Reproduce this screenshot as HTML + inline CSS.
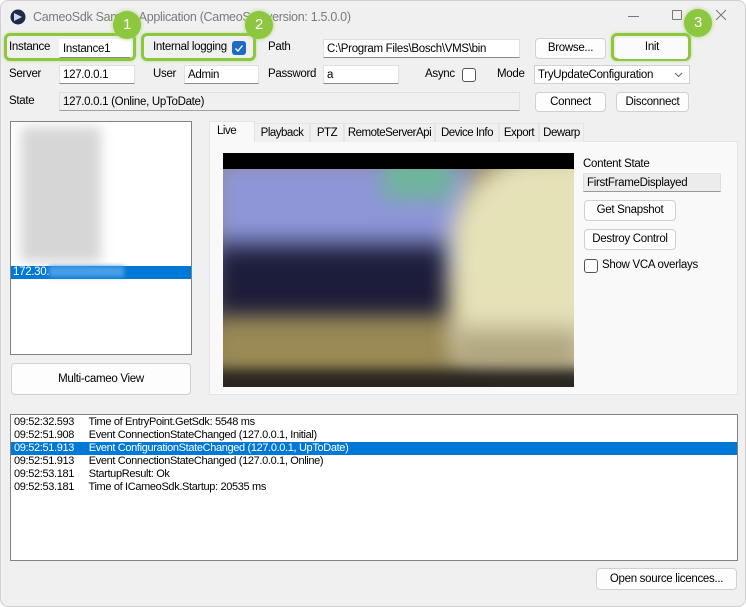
<!DOCTYPE html>
<html><head><meta charset="utf-8"><style>
*{box-sizing:border-box;margin:0;padding:0}
body{width:746px;height:607px;background:#fff;font-family:"Liberation Sans",sans-serif;font-size:11.5px;color:#000;position:relative;overflow:hidden;letter-spacing:-0.3px}
.win{position:absolute;left:0;top:0;width:746px;height:607px;background:#f0f0f0;border:1px solid #d0d0d0;border-radius:8px}
.a{position:absolute;white-space:nowrap}
.tb{position:absolute;background:#fff;border:1px solid #e0e0e0;border-bottom:1px solid #8a8a8a;padding:1px 3px;line-height:16px;height:19px}
.btn{position:absolute;background:#fdfdfd;border:1px solid #d0d0d0;border-radius:4px;text-align:center;line-height:18px}
.g{position:absolute;border:3px solid #8dc63f;border-radius:6px;box-shadow:0 0 3px #b8dd88}
.badge{position:absolute;width:28px;height:28px;border-radius:50%;background:#8dc63f;color:#fff;font-size:15px;text-align:center;line-height:28px;box-shadow:0 0 4px #a9d46f}
.cb{position:absolute;width:14px;height:14px;border:1px solid #555;border-radius:3px;background:#fff}
.tab{position:absolute;top:122px;height:19px;line-height:18px;border:1px solid #e4e4e4;border-bottom:none;background:#f0f0f0;text-align:center;letter-spacing:-0.5px;font-size:11.5px}
.log div{height:13px;line-height:13px;padding-left:3px;font-size:11px;white-space:nowrap;letter-spacing:-0.35px}
.log span{display:inline-block;width:72px}
</style></head><body><div class="win">
<svg class="a" style="left:9px;top:8px" width="16" height="16" viewBox="0 0 16 16"><circle cx="8" cy="8" r="7.5" fill="#1d2a4a"/><path d="M4 4 L12 8 L4 12 Z" fill="#cfd8ea"/></svg>
<div class="a" style="left:32px;top:9px;color:#7a7a7a;font-size:12.5px">CameoSdk Sample Application (CameoSdk version: 1.5.0.0)</div>
<div class="a" style="left:627px;top:15px;width:11px;height:1px;background:#777"></div>
<div class="a" style="left:671px;top:9px;width:10px;height:10px;border:1px solid #777;border-radius:1px"></div>
<svg class="a" style="left:714px;top:8px" width="12" height="12"><path d="M1 1L11 11M11 1L1 11" stroke="#777" stroke-width="1"/></svg>

<div class="g" style="left:3px;top:32px;width:132px;height:28px"></div>
<div class="g" style="left:140px;top:32px;width:115px;height:28px"></div>
<div class="g" style="left:610px;top:32px;width:80px;height:28px"></div>

<div class="a" style="left:8px;top:40px">Instance</div>
<div class="tb" style="left:58px;top:38px;width:72px;border-color:#fff;border-bottom-color:#8a8a8a">Instance1</div>
<div class="a" style="left:152px;top:40px">Internal logging</div>
<div class="a" style="left:231px;top:40px;width:14px;height:14px;background:#1e6bc4;border-radius:3px"><svg width="14" height="14"><path d="M3.5 7.5L6 10L10.5 4.5" stroke="#fff" stroke-width="1.3" fill="none"/></svg></div>
<div class="a" style="left:267px;top:40px">Path</div>
<div class="tb" style="left:322px;top:38px;width:197px">C:\Program Files\Bosch\VMS\bin</div>
<div class="btn" style="left:534px;top:37px;width:71px;height:21px">Browse...</div>
<div class="btn" style="left:615px;top:37px;width:72px;height:21px;border:none;background:#fbfbfb">Init</div>

<div class="a" style="left:8px;top:67px">Server</div>
<div class="tb" style="left:58px;top:64px;width:76px">127.0.0.1</div>
<div class="a" style="left:152px;top:67px">User</div>
<div class="tb" style="left:183px;top:64px;width:75px">Admin</div>
<div class="a" style="left:267px;top:67px">Password</div>
<div class="tb" style="left:322px;top:64px;width:76px">a</div>
<div class="a" style="left:424px;top:67px">Async</div>
<div class="cb" style="left:461px;top:67px"></div>
<div class="a" style="left:496px;top:67px">Mode</div>
<div class="tb" style="left:533px;top:64px;width:156px;border-color:#d0d0d0">TryUpdateConfiguration<svg style="position:absolute;right:6px;top:6px" width="9" height="6"><path d="M1 1L4.5 4.5L8 1" stroke="#666" fill="none"/></svg></div>

<div class="a" style="left:8px;top:94px">State</div>
<div class="tb" style="left:58px;top:91px;width:461px;background:#f0f0f0;border-color:#e0e0e0;border-bottom-color:#a0a0a0">127.0.0.1 (Online, UpToDate)</div>
<div class="btn" style="left:534px;top:91px;width:71px;height:20px">Connect</div>
<div class="btn" style="left:615px;top:91px;width:73px;height:20px">Disconnect</div>

<div class="badge" style="left:112px;top:10px">1</div>
<div class="badge" style="left:244px;top:10px">2</div>
<div class="badge" style="left:683px;top:8px">3</div>

<div class="a" style="left:9px;top:120px;width:182px;height:234px;background:#fff;border:1px solid #828282;overflow:hidden">
<div class="a" style="left:10px;top:5px;width:80px;height:135px;background:#d6d6d6;filter:blur(6px)"></div>
<div class="a" style="left:0;top:144px;width:180px;height:13px;background:#0078d7;color:#fff;line-height:13px;padding-left:2px">172.30.<span style="display:inline-block;width:75px;height:11px;background:#4a9ee6;filter:blur(2px);vertical-align:middle"></span></div>
</div>
<div class="btn" style="left:10px;top:362px;width:180px;height:32px;line-height:30px">Multi-cameo View</div>

<div class="a" style="left:208px;top:140px;width:529px;height:254px;background:#f9f9f9;border:1px solid #e4e4e4"></div>
<div class="tab" style="left:208px;top:120px;width:46px;height:21px;background:#f9f9f9;z-index:2;text-align:left;padding-left:7px">Live</div>
<div class="tab" style="left:253px;width:56px">Playback</div>
<div class="tab" style="left:309px;width:34px">PTZ</div>
<div class="tab" style="left:343px;width:91px">RemoteServerApi</div>
<div class="tab" style="left:434px;width:64px">Device Info</div>
<div class="tab" style="left:498px;width:40px">Export</div>
<div class="tab" style="left:538px;width:45px">Dewarp</div>

<div class="a" style="left:222px;top:152px;width:351px;height:234px;background:#000;overflow:hidden">
<div class="a" style="left:0;top:16px;width:351px;height:218px;overflow:hidden;background:#8a7a55">
<div class="a" style="left:-10px;top:-10px;width:260px;height:120px;background:#8e96d8;filter:blur(12px)"></div>
<div class="a" style="left:160px;top:-10px;width:70px;height:40px;background:#6fb59a;filter:blur(10px)"></div>
<div class="a" style="left:-10px;top:75px;width:240px;height:80px;background:#1c1d3a;filter:blur(12px)"></div>
<div class="a" style="left:-10px;top:150px;width:240px;height:60px;background:#9a8a55;filter:blur(12px)"></div>
<div class="a" style="left:228px;top:-15px;width:150px;height:230px;border-radius:90px 0 0 60px;background:#e6e2b8;filter:blur(12px)"></div>
<div class="a" style="left:230px;top:160px;width:130px;height:50px;background:#b0a680;filter:blur(12px)"></div>
<div class="a" style="left:-10px;top:200px;width:380px;height:30px;background:#2a2620;filter:blur(6px)"></div>
</div></div>

<div class="a" style="left:582px;top:157px">Content State</div>
<div class="tb" style="left:582px;top:172px;width:138px;background:#ececec;border-color:#e0e0e0;border-bottom-color:#999">FirstFrameDisplayed</div>
<div class="btn" style="left:583px;top:199px;width:92px;height:21px">Get Snapshot</div>
<div class="btn" style="left:583px;top:228px;width:92px;height:21px">Destroy Control</div>
<div class="cb" style="left:583px;top:258px"></div>
<div class="a" style="left:601px;top:258px">Show VCA overlays</div>

<div class="a log" style="left:9px;top:413px;width:728px;height:147px;background:#fff;border:1px solid #828282;padding-top:1px">
<div><span>09:52:32.593</span> Time of EntryPoint.GetSdk: 5548 ms</div>
<div><span>09:52:51.908</span> Event ConnectionStateChanged (127.0.0.1, Initial)</div>
<div style="background:#0078d7;color:#fff"><span>09:52:51.913</span> Event ConfigurationStateChanged (127.0.0.1, UpToDate)</div>
<div><span>09:52:51.913</span> Event ConnectionStateChanged (127.0.0.1, Online)</div>
<div><span>09:52:53.181</span> StartupResult: Ok</div>
<div><span>09:52:53.181</span> Time of ICameoSdk.Startup: 20535 ms</div>
</div>
<div class="btn" style="left:595px;top:567px;width:141px;height:22px;line-height:20px">Open source licences...</div>
</div></body></html>
